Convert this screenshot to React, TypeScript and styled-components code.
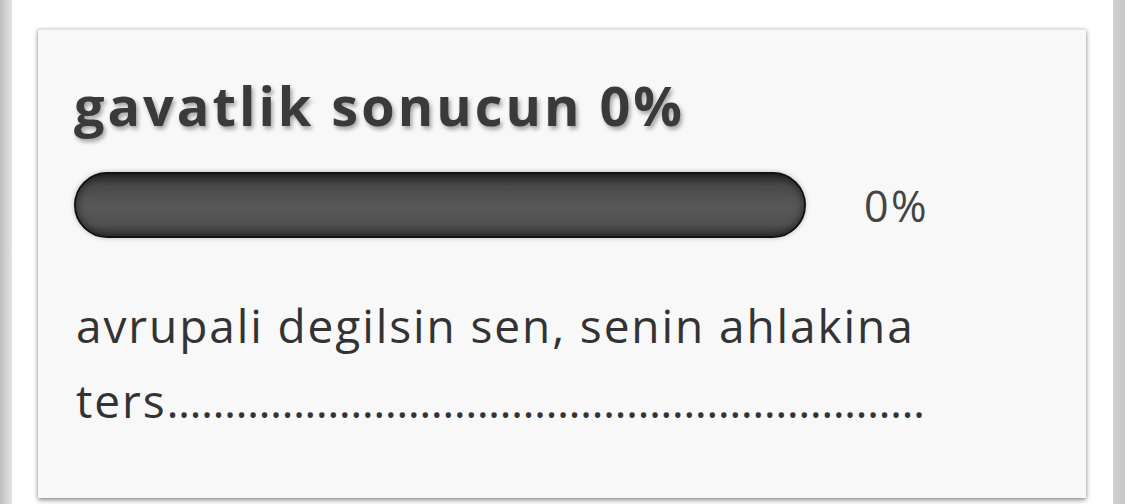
import React from "react";
import styled, { createGlobalStyle } from "styled-components";

const Global = createGlobalStyle`
  html, body { margin: 0; padding: 0; background: #ffffff; }
  body { font-family: "Open Sans", "Noto Sans", sans-serif; }
`;

const Page = styled.div`
  display: flex;
  width: 1125px;
  height: 504px;
  overflow: hidden;
`;

const Stripe = styled.div<{ $side: "left" | "right" }>`
  width: 12px;
  flex: none;
  background: ${(p) =>
    p.$side === "left"
      ? "linear-gradient(to right, #bdbdbd, #d6d6d6 60%, #e4e4e4)"
      : "linear-gradient(to right, #d0d0d0, #c6c6c6)"};
`;

const Main = styled.div`
  flex: 1;
  padding: 29px 15px 0 26px;
  background: #ffffff;
`;

const Card = styled.div`
  box-sizing: border-box;
  width: 1048px;
  height: 469px;
  background: #f8f8f8;
  border-top: 1px solid #e6e6e6;
  box-shadow: 0 2px 5px rgba(0, 0, 0, 0.45), 0 0 2px rgba(0, 0, 0, 0.15);
  padding: 42px 36px 0 36px;
  color: #333;
`;

const Title = styled.h1`
  margin: 0;
  font-size: 54px;
  line-height: 66px;
  font-weight: 700;
  letter-spacing: 3px;
  color: #3a3a3a;
  text-shadow: 2px 3px 4px rgba(0, 0, 0, 0.35);
`;

const ProgressRow = styled.div`
  display: flex;
  align-items: center;
  margin-top: 34px;
`;

const Bar = styled.div`
  box-sizing: border-box;
  width: 732px;
  height: 66px;
  border: 2px solid #121212;
  border-radius: 33px;
  background: linear-gradient(to bottom, #2e2e2e 0%, #4a4a4a 20%, #585858 50%, #525252 80%, #3a3a3a 100%);
  box-shadow: inset 0 0 10px rgba(0, 0, 0, 0.55), 0 0 5px rgba(0, 0, 0, 0.25);
`;

const Percent = styled.span`
  margin-left: 58px;
  font-size: 43px;
  letter-spacing: 2.5px;
  color: #444;
`;

const Text = styled.p`
  margin: 50px 0 0 2px;
  font-size: 46px;
  line-height: 75px;
  letter-spacing: 1.9px;
  color: #333;
  width: 950px;
  white-space: nowrap;
`;

const Dots = styled.span`
  letter-spacing: -0.6px;
`;

export default function App() {
  return (
    <Page>
      <Global />
      <Stripe $side="left" />
      <Main>
        <Card>
          <Title>gavatlik sonucun 0%</Title>
          <ProgressRow>
            <Bar />
            <Percent>0%</Percent>
          </ProgressRow>
          <Text>
            avrupali degilsin sen, senin ahlakina
            <br />
            ters<Dots>{".".repeat(66)}</Dots>
          </Text>
        </Card>
      </Main>
      <Stripe $side="right" />
    </Page>
  );
}
